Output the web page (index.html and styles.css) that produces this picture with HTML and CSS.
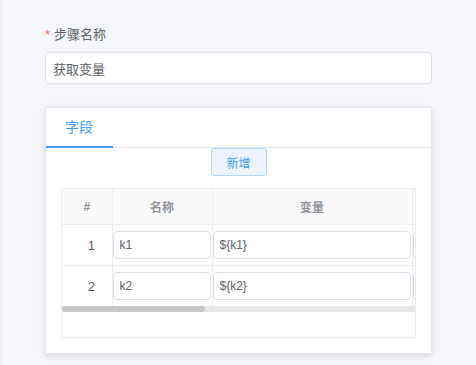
FILE: index.html
```html
<!DOCTYPE html>
<html lang="zh">
<head>
    <meta charset="UTF-8">
    <meta name="viewport" content="width=device-width, initial-scale=1.0">
    <title>步骤配置</title>
    <link rel="stylesheet" href="styles.css">
</head>
<body>
    <div class="page">
        <!-- 步骤名称 -->
        <div class="form-item">
            <label class="form-label"><span class="required">*</span>步骤名称</label>
            <input class="text-input" type="text" value="获取变量">
        </div>

        <!-- 字段卡片 -->
        <div class="card">
            <div class="tabs">
                <div class="tab active">字段</div>
            </div>
            <div class="toolbar">
                <button class="btn-add" type="button">新增</button>
            </div>
            <div class="table-box">
                <div class="table-scroll">
                    <table class="field-table">
                        <colgroup>
                            <col style="width: 50px">
                            <col style="width: 100px">
                            <col style="width: 200px">
                            <col style="width: 200px">
                            <col style="width: 200px">
                            <col style="width: 126px">
                        </colgroup>
                        <thead>
                            <tr>
                                <th>#</th>
                                <th>名称</th>
                                <th>变量</th>
                                <th></th>
                                <th></th>
                                <th></th>
                            </tr>
                        </thead>
                        <tbody>
                            <tr>
                                <td class="index">1</td>
                                <td><input class="cell-input" type="text" value="k1"></td>
                                <td><input class="cell-input" type="text" value="${k1}"></td>
                                <td><input class="cell-input" type="text"></td>
                                <td><input class="cell-input" type="text"></td>
                                <td></td>
                            </tr>
                            <tr>
                                <td class="index">2</td>
                                <td><input class="cell-input" type="text" value="k2"></td>
                                <td><input class="cell-input" type="text" value="${k2}"></td>
                                <td><input class="cell-input" type="text"></td>
                                <td><input class="cell-input" type="text"></td>
                                <td></td>
                            </tr>
                        </tbody>
                    </table>
                </div>
                <!-- barre de défilement horizontale -->
                <div class="scrollbar">
                    <div class="scrollbar-thumb" style="width: 40.4%"></div>
                </div>
                <div class="table-empty"></div>
            </div>
        </div>
    </div>
</body>
</html>
```

FILE: styles.css
```css
body {
    margin: 0;
    padding: 0;
    background-color: #f5f6fa;
    font-family: "Liberation Sans", "Noto Sans CJK SC", sans-serif;
    color: #606266;
    overflow: hidden;
}

.page {
    min-height: 365px;
    box-sizing: border-box;
    padding: 25px 0 0 45px;
    box-shadow: inset 2px 0 0 #eceef3;
}

.form-item {
    display: flex;
    flex-direction: column;
    gap: 7px;
    width: 387px;
}

.form-label {
    font-size: 13px;
    line-height: 20px;
    color: #606266;
}

.required {
    color: #f56c6c;
    margin-right: 4px;
}

.text-input {
    height: 32px;
    box-sizing: border-box;
    border: 1px solid #dcdfe6;
    border-radius: 4px;
    padding: 0 7px;
    font-family: inherit;
    font-size: 13px;
    color: #606266;
    background: #ffffff;
    outline: none;
}

.card {
    margin-top: 23px;
    width: 387px;
    box-sizing: border-box;
    background: #ffffff;
    border: 1px solid #e4e7ed;
    box-shadow: 0 2px 6px rgba(0, 0, 0, 0.12);
    padding-bottom: 15px;
}

.tabs {
    display: flex;
    height: 39px;
    border-bottom: 1px solid #e4e7ed;
}

.tab {
    padding: 0 20px 0 19px;
    font-size: 14px;
    line-height: 38px;
    color: #303133;
}

.tab.active {
    color: #409eff;
    border-bottom: 2px solid #409eff;
    margin-bottom: -1px;
}

.toolbar {
    display: flex;
    justify-content: center;
}

.btn-add {
    width: 56px;
    height: 28px;
    padding: 0;
    border: 1px solid #b3d8ff;
    border-radius: 3px;
    background: #ecf5ff;
    color: #409eff;
    font-family: inherit;
    font-size: 12px;
    cursor: pointer;
}

.table-box {
    margin: 12px 15px 0;
    border: 1px solid #ebeef5;
}

.table-scroll {
    overflow: hidden;
}

.field-table {
    width: 876px;
    table-layout: fixed;
    border-collapse: collapse;
}

.field-table th {
    height: 35px;
    padding: 0;
    background: #fafafa;
    color: #909399;
    font-size: 12px;
    font-weight: bold;
    text-align: center;
    border-right: 1px solid #ebeef5;
    border-bottom: 1px solid #ebeef5;
}

.field-table td {
    height: 28px;
    padding: 6px 1px 6px 0;
    border-right: 1px solid #ebeef5;
    border-bottom: 1px solid #ebeef5;
    font-size: 13px;
}

.field-table tbody tr:last-child td {
    border-bottom: none;
}

.field-table td.index {
    padding-left: 10px;
    text-align: center;
}

.cell-input {
    display: block;
    width: 100%;
    height: 28px;
    box-sizing: border-box;
    border: 1px solid #dcdfe6;
    border-radius: 4px;
    padding: 0 6px;
    font-family: inherit;
    font-size: 12px;
    color: #606266;
    background: #ffffff;
    outline: none;
}

.scrollbar {
    height: 6px;
    background: #e8e8e8;
}

.scrollbar-thumb {
    height: 100%;
    background: #c8c8c8;
    border-radius: 3px;
}

.table-empty {
    height: 25px;
}
```
